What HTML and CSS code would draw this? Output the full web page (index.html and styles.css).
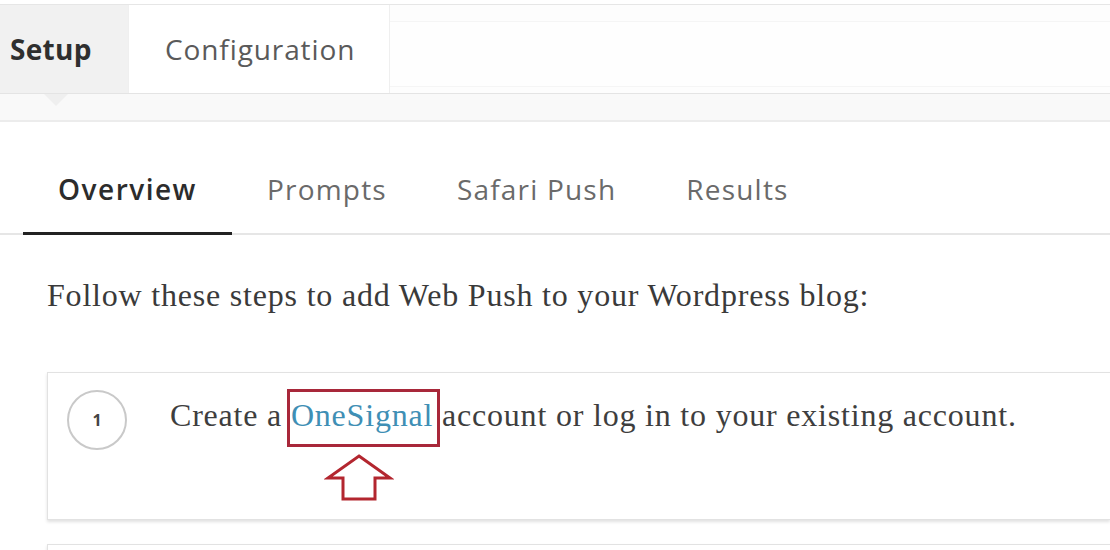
FILE: index.html
```html
<!DOCTYPE html>
<html>
<head>
<meta charset="utf-8">
<link rel="stylesheet" href="styles.css">
</head>
<body>
<div class="topbar">
  <div class="tab tab-setup">Setup</div>
  <div class="tab tab-config">Configuration</div>
  <div class="topbar-rest"><div class="rest-inner"></div></div>
</div>
<div class="band"><span class="pointer"></span></div>
<div class="main">
  <div class="subnav">
    <div class="subtab active">Overview</div>
    <div class="subtab">Prompts</div>
    <div class="subtab">Safari Push</div>
    <div class="subtab">Results</div>
  </div>
  <p class="intro">Follow these steps to add Web Push to your Wordpress blog:</p>
  <div class="card">
    <div class="step-num">1</div>
    <div class="step-body">
      <p class="step-text">Create a <span class="hl"><a class="link">OneSignal</a></span> account or log in to your existing account.</p>
      <svg class="arrow" width="70" height="50" viewBox="0 0 70 50">
        <path d="M35 3 L66 25 L51 25 L51 46 L19 46 L19 25 L4 25 Z" fill="#fff" stroke="#b3262f" stroke-width="3" stroke-linejoin="miter"/>
      </svg>
    </div>
  </div>
  <div class="card card-next"></div>
</div>
</body>
</html>
```
FILE: styles.css
```css
html, body {
  margin: 0;
  padding: 0;
  background: #ffffff;
}
body {
  width: 1110px;
  height: 550px;
  overflow: hidden;
  font-family: "Open Sans", "Liberation Sans", sans-serif;
}
.topbar {
  margin-top: 4px;
  height: 88px;
  border-top: 1px solid #e6e6e6;
  border-bottom: 1px solid #e4e4e4;
  display: flex;
  background: #fdfdfd;
}
.tab {
  display: flex;
  align-items: center;
  font-size: 28px;
  color: #555;
}
.tab-setup {
  width: 118px;
  padding-left: 10px;
  background: #f1f1f1;
  color: #2f2f2f;
  font-weight: 700;
  letter-spacing: 0.3px;
}
.tab-config {
  width: 224px;
  padding-left: 36px;
  border-left: 1px solid #efefef;
  border-right: 1px solid #efefef;
  background: #fff;
  color: #5a5a5a;
  letter-spacing: 0.9px;
}
.topbar-rest {
  flex: 1;
  padding: 16px 0 6px 0;
  display: flex;
}
.rest-inner {
  flex: 1;
  border-top: 1px solid #f5f5f5;
  border-bottom: 1px solid #f5f5f5;
  background: #fefefe;
}
.band {
  position: relative;
  height: 26px;
  background: #f9f9f9;
  border-bottom: 2px solid #ececec;
}
.pointer {
  position: absolute;
  left: 44px;
  top: 0;
  width: 0;
  height: 0;
  border-left: 12px solid transparent;
  border-right: 12px solid transparent;
  border-top: 12px solid #efefef;
}
.main {
  background: #fff;
}
.subnav {
  display: flex;
  padding: 48px 0 0 23px;
  border-bottom: 2px solid #e6e6e6;
}
.subtab {
  padding: 0 35px 24px;
  font-size: 28px;
  line-height: 38px;
  color: #6a6a6a;
  font-family: "Open Sans", "Liberation Sans", sans-serif;
  letter-spacing: 1.2px;
  border-bottom: 3px solid transparent;
  margin-bottom: -2px;
}
.subtab.active {
  color: #2c2c2c;
  font-weight: 600;
  letter-spacing: 1.5px;
  border-bottom-color: #222;
}
.intro {
  margin: 40px 0 0 47px;
  font-family: "Liberation Serif", "DejaVu Serif", serif;
  font-size: 32px;
  line-height: 40px;
  color: #3a3a3a;
  letter-spacing: 0.8px;
}
.card {
  margin: 57px 0 0 47px;
  height: 148px;
  border: 1px solid #e2e2e2;
  border-right: none;
  box-shadow: 0 2px 3px rgba(0,0,0,0.12);
  display: flex;
  align-items: flex-start;
  padding: 16px 0 0 19px;
  box-sizing: border-box;
}
.card-next {
  margin-top: 24px;
  height: 40px;
}
.step-num {
  width: 60px;
  height: 60px;
  flex: none;
  border: 2px solid #c9c9c9;
  border-radius: 50%;
  box-sizing: border-box;
  display: flex;
  align-items: center;
  justify-content: center;
  font-family: "Open Sans", sans-serif;
  font-size: 16px;
  font-weight: 700;
  color: #444;
  margin-top: 1px;
}
.step-body {
  margin-left: 43px;
  position: relative;
}
.step-text {
  margin: 0;
  font-family: "Liberation Serif", "DejaVu Serif", serif;
  font-size: 32px;
  line-height: 52px;
  color: #3e3e3e;
  letter-spacing: 0.8px;
}
.hl {
  position: relative;
}
.hl::after {
  content: "";
  position: absolute;
  left: -4px;
  top: -8px;
  width: 147px;
  height: 52px;
  border: 3px solid #a8283a;
}
.link {
  color: #3f8fb5;
}
.arrow {
  position: absolute;
  left: 154px;
  top: 64px;
}
```
